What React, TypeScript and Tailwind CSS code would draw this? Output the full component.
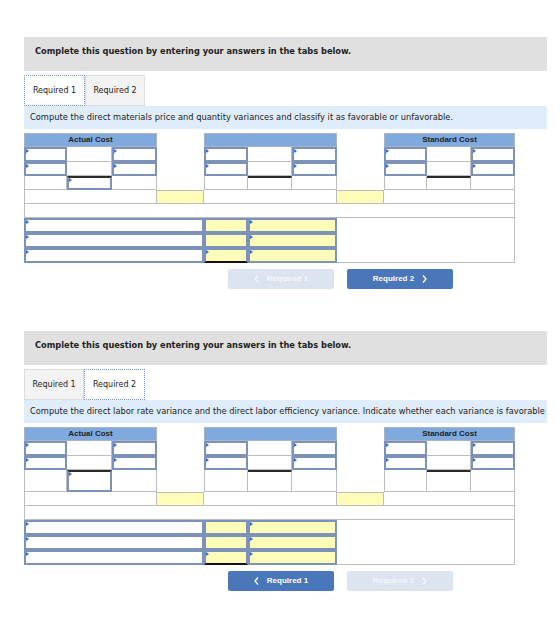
import React from 'react'

// little blue arrow that marks an entry cell
const Mark = () => (
  <span className="absolute left-0 top-0 h-0 w-0 border-y-[2px] border-l-[3px] border-y-transparent border-l-[#2f6ad4]" />
)

function Inp({ className = '', mark = false }: { className?: string; mark?: boolean }) {
  return (
    <div className={`relative border-2 border-[#7c92b8] ${className}`}>
      {mark && <Mark />}
    </div>
  )
}

const cell = 'border-r border-b border-[#bdbdbd] bg-white'
const head = 'border border-[#a9b4c2] bg-[#80a9dd] text-center font-["Liberation_Sans",sans-serif] text-[8px] font-bold leading-[12px] text-[#1f1f1f]'

function Sheet({ tall }: { tall?: boolean }) {
  return (
    <div
      className={`grid w-[491px] grid-cols-[43px_45px_45px_47px_44px_44px_45px_47px_43px_44px_44px] ${
        tall ? 'grid-rows-[14px_15px_14px_22px_14px_14px_15px_15px_15px]' : 'grid-rows-[14px_15px_14px_14px_14px_14px_15px_15px_15px]'
      }`}
    >
      {/* column heads */}
      <div className={`col-span-3 ${head}`}>Actual Cost</div>
      <div />
      <div className={`col-span-3 ${head}`}></div>
      <div />
      <div className={`col-span-3 ${head}`}>Standard Cost</div>

      {/* two input rows */}
      {[0, 1].map((r) => (
        <React.Fragment key={r}>
          <Inp className="bg-white" mark />
          <div className={cell} />
          <Inp className="bg-white" mark />
          <div />
          <Inp className="bg-white" mark />
          <div className={cell} />
          <Inp className="bg-white" mark />
          <div />
          <Inp className="bg-white" mark />
          <div className={cell} />
          <Inp className="bg-white" mark />
        </React.Fragment>
      ))}

      {/* totals row */}
      <div className={`border-l ${cell}`} />
      <Inp className="border-t-[#2a2a2a] bg-white" mark />
      <div className={cell} />
      <div />
      <div className={`border-l ${cell}`} />
      <div className={`border-t-2 border-t-[#2a2a2a] ${cell}`} />
      <div className={cell} />
      <div />
      <div className={`border-l ${cell}`} />
      <div className={`border-t-2 border-t-[#2a2a2a] ${cell}`} />
      <div className={cell} />

      {/* variance row */}
      <div className={`col-span-3 border-l ${cell}`} />
      <div className="border-r border-b border-t border-[#bdbdbd] bg-[#fffbb8]" />
      <div className={`col-span-3 ${cell}`} />
      <div className="border-r border-b border-t border-[#bdbdbd] bg-[#fffbb8]" />
      <div className={`col-span-3 ${cell}`} />

      <div className={`col-span-11 border-l ${cell}`} />

      {/* result lines */}
      <Inp className="col-span-4 bg-white" mark />
      <Inp className="bg-[#fffbb8]" />
      <Inp className="col-span-2 bg-[#fffbb8]" mark />
      <div className={`col-span-4 row-span-3 ${cell}`} />

      <Inp className="col-span-4 bg-white" mark />
      <Inp className="bg-[#fffbb8]" />
      <Inp className="col-span-2 bg-[#fffbb8]" mark />

      <Inp className="col-span-4 bg-white" mark />
      <Inp className="border-b-[#111] bg-[#fffbb8]" mark />
      <Inp className="col-span-2 bg-[#fffbb8]" mark />
    </div>
  )
}

function Tab({ label, on }: { label: string; on: boolean }) {
  return (
    <div
      className={
        on
          ? 'flex h-[31px] w-[61px] items-center justify-center border border-dotted border-[#7890c0] bg-white'
          : 'flex h-[31px] w-[60px] items-center justify-center border border-[#dcdcdc] bg-[#f3f3f3]'
      }
    >
      {label}
    </div>
  )
}

const Chevron = ({ left }: { left?: boolean }) => (
  <svg width="5" height="8" viewBox="0 0 5 8">
    <polyline
      points={left ? '4,0.5 1,4 4,7.5' : '1,0.5 4,4 1,7.5'}
      fill="none"
      stroke="currentColor"
      strokeWidth="1.3"
    />
  </svg>
)

function NavButtons({ step }: { step: number }) {
  const on = 'flex h-[20px] w-[106px] items-center justify-center gap-[8px] rounded-[2px] bg-[#4a77b9] text-white'
  const off = 'flex h-[20px] w-[106px] items-center justify-center gap-[8px] rounded-[2px] bg-[#dce4ef] text-[#f4f7fb]'
  return (
    <div className="mt-[6px] flex gap-[13px] pl-[204px] font-['Liberation_Sans',sans-serif] text-[8px] font-bold">
      <button className={step === 2 ? on : off}>
        <Chevron left />
        <span>Required 1</span>
      </button>
      <button className={step === 1 ? on : off}>
        <span>Required 2</span>
        <Chevron />
      </button>
    </div>
  )
}

function Part({ step, prompt, tall }: { step: number; prompt: string; tall?: boolean }) {
  return (
    <section>
      <div className="h-[34px] w-[523px] bg-[#e0e0e0] pl-[11px] pt-[9px] text-[8.25px] font-bold leading-[10px]">
        Complete this question by entering your answers in the tabs below.
      </div>
      <div className="mt-[4px] flex text-[8px]">
        <Tab label="Required 1" on={step === 1} />
        <Tab label="Required 2" on={step === 2} />
      </div>
      <div className="flex h-[23px] w-[523px] items-center overflow-hidden whitespace-nowrap bg-[#dfedfa] pl-[6px] text-[8.3px]">
        {prompt}
      </div>
      <div className="mt-[4px]">
        <Sheet tall={tall} />
      </div>
      <NavButtons step={step} />
    </section>
  )
}

export default function App() {
  return (
    <div className="h-[632px] w-[560px] bg-white pl-[24px] pt-[37px] font-['DejaVu_Sans',sans-serif] text-[#222]">
      <Part
        step={1}
        prompt="Compute the direct materials price and quantity variances and classify it as favorable or unfavorable."
      />
      <div className="mt-[42px]">
        <Part
          step={2}
          tall
          prompt="Compute the direct labor rate variance and the direct labor efficiency variance. Indicate whether each variance is favorable"
        />
      </div>
    </div>
  )
}
